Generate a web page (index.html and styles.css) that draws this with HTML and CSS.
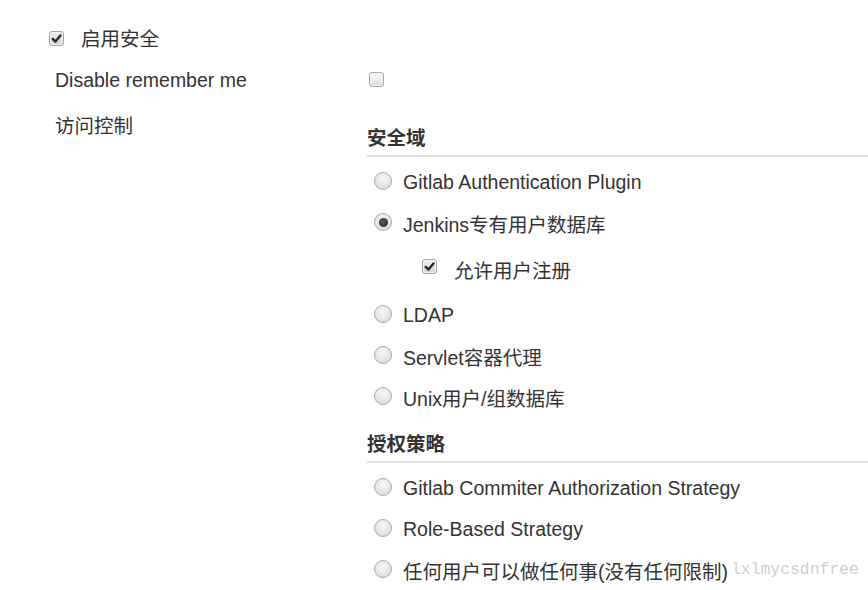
FILE: index.html
```html
<!DOCTYPE html>
<html lang="zh-CN">
<head>
<meta charset="utf-8">
<title>Configure Global Security</title>
<link rel="stylesheet" href="styles.css">
</head>
<body>
<div class="page">
  <div class="enable-row">
    <span class="cb checked"><svg viewBox="0 0 10 10"><path d="M1.6 5.4 L4 7.8 L8.6 2.2" /></svg></span>
    <span class="enable-label">启用安全</span>
  </div>

  <div class="form">
    <div class="label row-remember">Disable remember me</div>
    <div class="value row-remember">
      <span class="cb cb-remember"></span>
    </div>

    <div class="label label-access">访问控制</div>
    <div class="value value-access">
      <div class="section">
        <div class="section-title">安全域</div>
        <div class="option"><span class="radio"></span><span>Gitlab Authentication Plugin</span></div>
        <div class="option"><span class="radio selected"></span><span>Jenkins专有用户数据库</span></div>
        <div class="option nested"><span class="cb checked"><svg viewBox="0 0 10 10"><path d="M1.6 5.4 L4 7.8 L8.6 2.2" /></svg></span><span class="nested-label">允许用户注册</span></div>
        <div class="option"><span class="radio"></span><span>LDAP</span></div>
        <div class="option"><span class="radio"></span><span>Servlet容器代理</span></div>
        <div class="option"><span class="radio"></span><span>Unix用户/组数据库</span></div>
      </div>
      <div class="section section-auth">
        <div class="section-title">授权策略</div>
        <div class="option"><span class="radio"></span><span>Gitlab Commiter Authorization Strategy</span></div>
        <div class="option"><span class="radio"></span><span>Role-Based Strategy</span></div>
        <div class="option"><span class="radio"></span><span>任何用户可以做任何事(没有任何限制)</span></div>
      </div>
    </div>
  </div>
  <div class="watermark">lxlmycsdnfree</div>
</div>
</body>
</html>
```

FILE: styles.css
```css
html, body {
  margin: 0;
  padding: 0;
  background: #ffffff;
}

body {
  font-family: "Liberation Sans", Arial, "Noto Sans CJK SC", sans-serif;
  font-size: 19.5px;
  color: #333333;
  overflow: hidden;
}

.page {
  position: relative;
  width: 868px;
  height: 590px;
}

.enable-row {
  display: flex;
  align-items: center;
  height: 24px;
  line-height: 24px;
  padding: 27px 0 0 49px;
}

.enable-row .cb {
  margin-top: -2px;
}

.enable-label {
  margin-left: 17px;
}

.form {
  display: grid;
  grid-template-columns: 312px 1fr;
  padding-left: 55px;
  margin-top: 17px;
}

.label {
  line-height: 24px;
}

.row-remember {
  height: 24px;
  line-height: 24px;
}

.value.row-remember {
  display: flex;
  align-items: center;
  padding-left: 2px;
}

.cb-remember {
  margin-top: -1px;
}

.label-access {
  margin-top: 22px;
}

.value-access {
  margin-top: 22px;
  padding-top: 12px;
}

.section-title {
  font-weight: bold;
  line-height: 24px;
  padding-bottom: 5px;
  border-bottom: 2px solid #e0e0e0;
  margin-bottom: 5px;
}

.section-auth {
  margin-top: 14px;
}

.option {
  display: flex;
  align-items: center;
  height: 41px;
  padding-left: 7px;
}

.option > span:last-child {
  margin-left: 11px;
}

.option.nested {
  height: 51px;
  padding-left: 55px;
}

.option.nested .cb {
  margin-top: -6px;
}

.option.nested .nested-label {
  margin-left: 17px;
}

/* checkbox */
.cb {
  box-sizing: border-box;
  width: 15px;
  height: 15px;
  border: 1px solid #a6a6a6;
  border-radius: 3px;
  background: linear-gradient(#fcfcfc, #dcdcdc);
  box-shadow: inset 0 0 0 1px #f4f4f4;
  display: inline-flex;
  align-items: center;
  justify-content: center;
  flex: none;
}

.cb.checked {
  background: linear-gradient(#f0f0f0, #d2d2d2);
}

.cb svg {
  width: 11px;
  height: 11px;
}

.cb svg path {
  fill: none;
  stroke: #2b2b2b;
  stroke-width: 2.2;
  stroke-linecap: round;
  stroke-linejoin: round;
}

/* radio */
.radio {
  box-sizing: border-box;
  width: 18px;
  height: 18px;
  border-radius: 50%;
  border: 1px solid #a9a9a9;
  background: radial-gradient(circle at 50% 35%, #f7f7f7 0%, #e6e6e6 55%, #d6d6d6 100%);
  flex: none;
  margin-top: -3px;
  position: relative;
}

.radio.selected::after {
  content: "";
  position: absolute;
  left: 3.5px;
  top: 3.5px;
  width: 9px;
  height: 9px;
  border-radius: 50%;
  background: radial-gradient(circle at 45% 40%, #5a5a5a 0%, #333 70%);
}

.watermark {
  position: absolute;
  left: 731px;
  top: 558px;
  font-family: "Liberation Mono", "DejaVu Sans Mono", monospace;
  font-size: 16.4px;
  line-height: 24px;
  color: rgba(170, 170, 170, 0.6);
  white-space: nowrap;
}
```
